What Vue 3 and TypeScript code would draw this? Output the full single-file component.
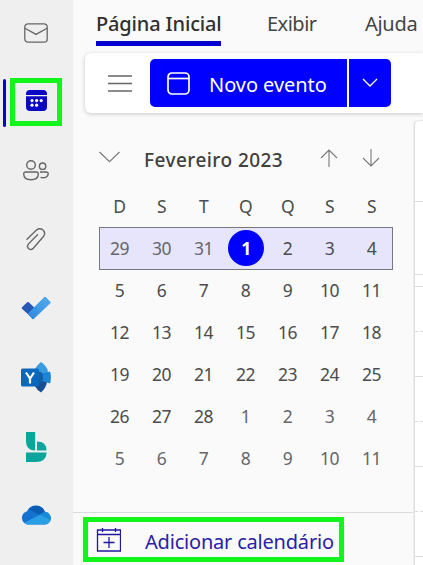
<script setup lang="ts">
interface Day {
  n: number
  other?: boolean
  today?: boolean
}
const weekdays: string[] = ['D', 'S', 'T', 'Q', 'Q', 'S', 'S']
const start = new Date(2023, 0, 29)
const weeks: Day[][] = Array.from({ length: 6 }, (_, w) =>
  Array.from({ length: 7 }, (_, d) => {
    const date = new Date(start.getFullYear(), start.getMonth(), start.getDate() + w * 7 + d)
    const month = date.getMonth()
    return { n: date.getDate(), other: month !== 1, today: month === 1 && date.getDate() === 1 }
  })
)
const slots: { h: number; dashed?: boolean }[] = [
  { h: 81 }, { h: 73 }, { h: 12 }, { h: 45, dashed: true }, { h: 45 },
  { h: 45, dashed: true }, { h: 45 }, { h: 45, dashed: true }, { h: 45 }
]
</script>

<template>
  <div class="app">
    <nav class="rail">
      <div class="item">
        <svg width="24" height="20" viewBox="0 0 24 20" fill="none" stroke="#666" stroke-width="1.3">
          <rect x=".8" y=".8" width="22.4" height="18.4" rx="3.2" />
          <path d="M1 5.2 12 11.4 23 5.2" />
        </svg>
      </div>
      <div class="item selected">
        <div class="mark">
          <svg width="21" height="21" viewBox="0 0 21 21">
            <path d="M0 5V4a4 4 0 0 1 4-4h13a4 4 0 0 1 4 4v1z" fill="#0b08c4" />
            <path d="M0 6.2h21V17a4 4 0 0 1-4 4H4a4 4 0 0 1-4-4z" fill="#0b08c4" />
            <g fill="#fff">
              <circle cx="6" cy="10.6" r="1.6" /><circle cx="10.6" cy="10.6" r="1.6" /><circle cx="15.2" cy="10.6" r="1.6" />
              <circle cx="6" cy="15.2" r="1.6" /><circle cx="10.6" cy="15.2" r="1.6" />
            </g>
          </svg>
        </div>
      </div>
      <div class="item">
        <svg width="26" height="21" viewBox="0 0 26 21" fill="none" stroke="#666" stroke-width="1.4">
          <circle cx="8" cy="5" r="4.3" />
          <circle cx="19.6" cy="6.2" r="3.2" />
          <path d="M2.7 12h10.6a2 2 0 0 1 2 2c0 3.5-2.6 5.8-7.3 5.8S.7 17.500.7 14a2 2 0 0 1 2-2z" />
          <path d="M17 12h6.200a2 2 0 0 1 2 2c0 2.500-3 4.400-7.700 3.400" />
        </svg>
      </div>
      <div class="item">
        <svg width="20" height="23" viewBox="0 0 20 23" fill="none" stroke="#666" stroke-width="1.4" stroke-linecap="round">
          <path d="M1 11.200 10.200 2.300c4.800-4.200 11 1.500 7 6.500L7.300 20.300c-2.800 3-7.600-.4-5-4.200L11.500 6.800" />
        </svg>
      </div>
      <div class="item raised">
        <svg width="30" height="24" viewBox="0 0 30 24">
          <defs>
            <linearGradient id="todo" x1="0" y1="1" x2="1" y2="0"><stop stop-color="#3086dc" /><stop offset="1" stop-color="#50aef0" /></linearGradient>
          </defs>
          <path d="M1 11.200 6.200 6.200q.8-.6 1.500 0L18 16l-6.200 6.500L1 12.700q-.7-.8 0-1.500z" fill="#2459b5" />
          <path d="M6.700 17.700 23.300 1q.8-.6 1.500 0l4.500 4.700q.8.700 0 1.500L12.700 23q-.7.500-1.400 0z" fill="url(#todo)" />
        </svg>
      </div>
      <div class="item">
        <svg width="30" height="31" viewBox="0 0 30 31">
          <path d="M20 0q5 3.500 6.700 8v6L20 16 13.500 8.500Q15 4 20 0z" fill="#3a9ce0" />
          <path d="M20 15 26 20q-1 6-6 10.500-4-2.500-6.500-7z" fill="#164f91" />
          <path d="M18 12 29 9.500q1.800 6 0 12L18 18z" fill="#1a85d6" />
          <path d="M17 10q5-1 5 5.500T17 21z" fill="#135fa6" />
          <rect y="6.500" width="18" height="18" rx="1.500" fill="#0868bd" />
          <path d="m5 10.500 4 6 4-6M9 16.500v5" fill="none" stroke="#fff" stroke-width="2.200" />
        </svg>
      </div>
      <div class="item">
        <svg width="21" height="30" viewBox="0 0 21 30" fill="#0ba59b">
          <path d="M0 0h9.200v18.500Q0 18.500 0 9.500z" />
          <path d="M11 9.500q9.500 0 9.500 9H11z" />
          <path d="M0 20.500h20.700q-.7 9.500-10.700 9.500H0z" />
        </svg>
      </div>
      <div class="item raised">
        <svg width="31" height="20" viewBox="0 0 31 20">
          <defs>
            <clipPath id="cloud"><path d="M7 19.500a6.700 6.700 0 0 1-.9-13.200A9.500 9.500 0 0 1 23.800 6.800 6.400 6.400 0 0 1 24.500 19.500z" /></clipPath>
          </defs>
          <g clip-path="url(#cloud)">
            <path d="M0 0h31v20H0z" fill="#1473d1" />
            <path d="M8 4Q15-3 24 5v7L17.500 9.500z" fill="#0b5db4" />
            <path d="M16 11 25 6l6 2v10z" fill="#168bda" />
            <path d="M2 18.500 19 9.700 31 16v4H4z" fill="#2b9fe5" />
          </g>
        </svg>
      </div>
    </nav>

    <main class="main">
      <header class="tabs">
        <span class="tab active">Página Inicial</span>
        <span class="tab view">Exibir</span>
        <span class="tab help">Ajuda</span>
      </header>
      <div class="toolbar">
        <svg width="24" height="17" viewBox="0 0 24 17" stroke="#666" stroke-width="1.300">
          <path d="M0 1h24M0 8.500h24M0 16h24" />
        </svg>
        <button class="new">
          <svg width="23" height="23" viewBox="0 0 23 23" fill="none" stroke="#fff" stroke-width="1.700">
            <rect x="1" y="1" width="21" height="21" rx="4" /><path d="M1 6.500h21" />
          </svg>
          <span>Novo evento</span>
        </button>
        <button class="more">
          <svg width="16" height="10" viewBox="0 0 16 10" fill="none" stroke="#fff" stroke-width="1.300"><path d="m1 1 7 7 7-7" /></svg>
        </button>
      </div>

      <div class="body">
        <aside class="side">
          <div class="month">
            <svg class="fold" width="21" height="12" viewBox="0 0 21 12" fill="none" stroke="#777" stroke-width="1.100"><path d="m.5 1 10 9.700L20.500 1" /></svg>
            <h2>Fevereiro 2023</h2>
            <svg class="up" width="18" height="18" viewBox="0 0 18 18" fill="none" stroke="#777" stroke-width="1.100"><path d="M9 18V1M1 9l8-8 8 8" /></svg>
            <svg width="18" height="18" viewBox="0 0 18 18" fill="none" stroke="#777" stroke-width="1.100"><path d="M9 0v17M1 9l8 8 8-8" /></svg>
          </div>
          <div class="week names">
            <span v-for="(d, i) in weekdays" :key="i">{{ d }}</span>
          </div>
          <div v-for="(week, w) in weeks" :key="w" class="week" :class="{ current: w === 0 }">
            <span v-for="day in week" :key="day.n" :class="{ other: day.other, today: day.today }"><b v-if="day.today">{{ day.n }}</b><template v-else>{{ day.n }}</template></span>
          </div>
          <div class="footer">
            <div class="add">
              <svg width="25" height="24" viewBox="0 0 25 24" fill="none" stroke="#2019a0" stroke-width="1.300">
                <path d="M1.500 2h23v21h-23zM1.500 6.500h23M6.500 0v4M19.500 0v4M13 9v11M7.500 14.500h11" />
              </svg>
              <span>Adicionar calendário</span>
            </div>
          </div>
        </aside>
        <section class="agenda">
          <div v-for="(s, i) in slots" :key="i" class="slot" :class="{ dashed: s.dashed }" :style="{ height: s.h + 'px' }"></div>
        </section>
      </div>
    </main>
  </div>
</template>

<style>
body { overflow: hidden; background: #fafafa; }
</style>

<style scoped>
.app { display: flex; width: 423px; height: 565px; overflow: hidden; background: #fafafa; font-family: "Noto Sans", "Open Sans", sans-serif; color: #444; }
.app * { box-sizing: border-box; }
.rail { flex: 0 0 73px; height: 565px; background: #efefef; overflow: hidden; }
.item { height: 69px; display: flex; align-items: center; justify-content: center; padding-right: 1px; }
.item:first-child { height: 67px; padding-bottom: 1px; }
.raised { padding-bottom: 2px; }
.selected { justify-content: flex-start; padding-left: 3px; gap: 4px; }
.selected::before { content: ""; width: 3px; height: 48px; border-radius: 2px; background: #0b08c4; margin-top: 2px; }
.mark { width: 52px; height: 48px; border: 5px solid #12f51b; display: flex; align-items: center; justify-content: center; padding-bottom: 2px; }
.main { flex: 1; min-width: 0; display: flex; flex-direction: column; }
.tabs { height: 53px; flex: none; display: flex; padding-left: 23px; align-items: flex-start; white-space: nowrap; font-size: 20px; color: #444; }
.tab { line-height: 28px; padding-top: 10px; height: 46px; }
.active { width: 125px; font-weight: 500; border-bottom: 5px solid #0500d2; color: #303030; letter-spacing: -.15px; }
.view { margin-left: 46px; width: 51px; letter-spacing: -.5px; }
.help { margin-left: 47px; letter-spacing: -.3px; }
.toolbar { flex: none; height: 60px; margin-left: 12px; background: #fff; border-radius: 6px 0 0 6px; box-shadow: 0 1px 4px rgba(0,0,0,.2); display: flex; align-items: center; padding-left: 23px; }
button { border: 0; background: #00f; color: #fff; height: 48px; display: flex; align-items: center; padding: 0; font: 450 20px "Noto Sans", "Open Sans", sans-serif; white-space: nowrap; }
.new { margin-left: 18px; width: 197px; border-radius: 5px 0 0 5px; padding-left: 17px; gap: 19px; letter-spacing: -.05px; }
.new span { padding-top: 2px; }
.more { width: 42px; margin-left: 2px; border-radius: 0 5px 5px 0; justify-content: center; }
.body { flex: 1; display: flex; min-height: 0; }
.side { width: 341px; flex: none; display: flex; flex-direction: column; }
.month { height: 72px; margin-top: 9px; padding: 0 14px 0 26px; display: flex; align-items: center; }
.fold { margin-top: -2px; }
.month h2 { margin: 3px 0 0 24px; width: 176px; font-size: 19px; font-weight: 500; letter-spacing: .45px; white-space: nowrap; color: #404040; }
.up + svg { margin-left: 24px; }
.week { margin-left: 26px; width: 294px; height: 42px; display: grid; grid-template-columns: repeat(7, 42px); align-items: center; justify-content: center; text-align: center; font-size: 17.500px; letter-spacing: -.5px; color: #4c4c4c; }
.week > span { padding-right: 1px; }
.names { height: 33px; padding-bottom: 11px; }
.current { height: 43px; margin-bottom: -1px; padding-bottom: 1px; background: #e6e5fb; border: 1px solid #777781; }
.week > .other { color: #66666a; }
.week > .today { display: flex; justify-content: center; padding: 0; }
.today b { width: 36px; height: 36px; border-radius: 50%; background: #00f; color: #fff; line-height: 36px; }
.footer { margin-top: auto; height: 53px; border-top: 1px solid #d9dbdd; padding: 4px 0 0 10px; }
.add { width: 261px; height: 45px; border: 5px solid #12f51b; display: flex; align-items: center; padding-left: 8px; gap: 24px; color: #2a20a4; font-size: 20px; letter-spacing: -.2px; white-space: nowrap; }
.add span { padding-top: 3px; }
.agenda { flex: 1; margin-top: 7px; background: #fff; border-left: 1px solid #dedede; border-top: 1px solid #e6e6e6; border-radius: 5px 0 0 0; box-shadow: -1px 0 1px #eee; overflow: hidden; }
.slot { border-bottom: 1px solid #dcdcdc; }
.dashed { border-bottom-style: dashed; }
</style>
